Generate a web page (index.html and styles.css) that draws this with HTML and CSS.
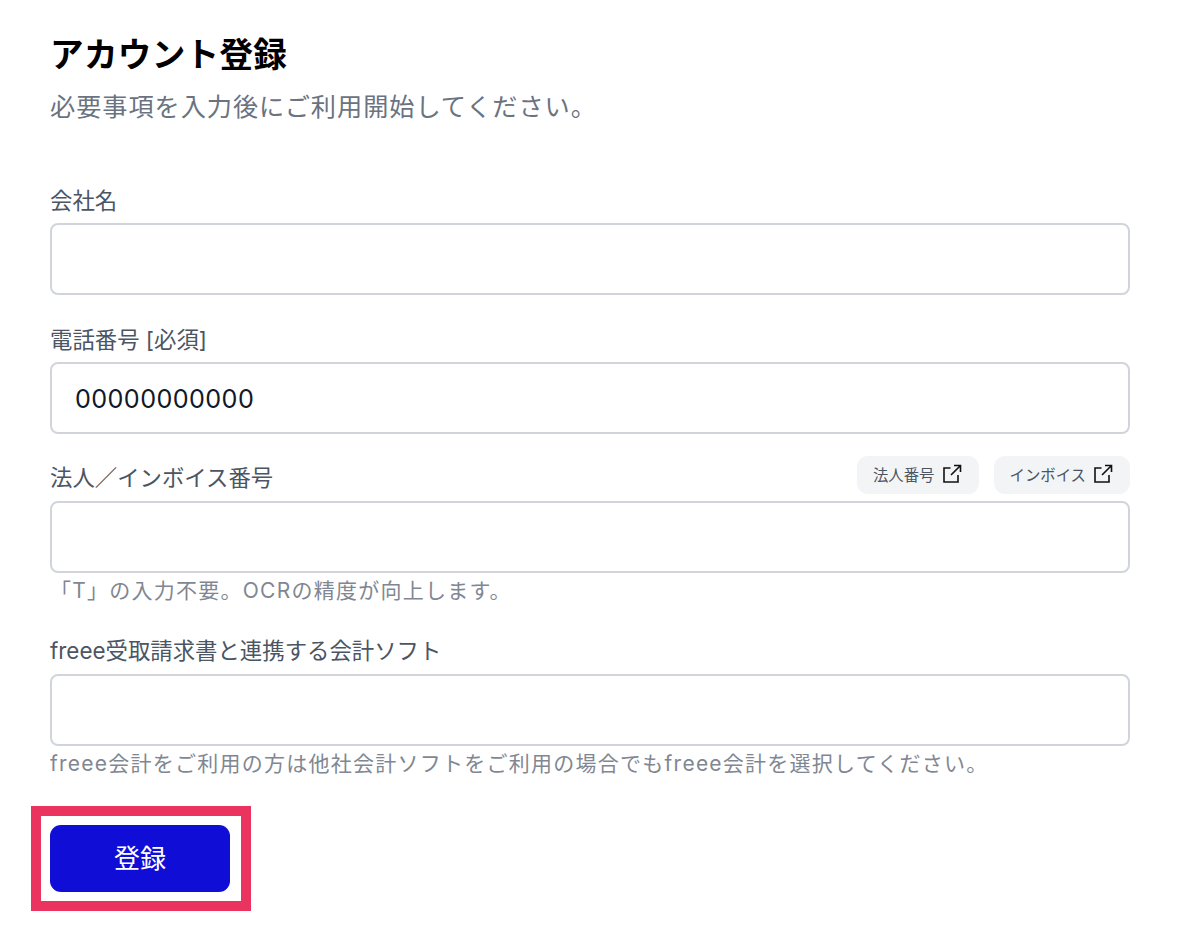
FILE: index.html
```html
<!DOCTYPE html>
<html lang="ja">
<head>
    <meta charset="UTF-8">
    <title>アカウント登録</title>
    <link rel="stylesheet" href="styles.css">
</head>
<body>

<main class="page">
    <h1 class="title">アカウント登録</h1>
    <p class="lead">必要事項を入力後にご利用開始してください。</p>

    <form class="form">
        <div class="field">
            <label class="label">会社名</label>
            <input class="input" type="text">
        </div>

        <div class="field">
            <label class="label">電話番号 [必須]</label>
            <input class="input" type="text" value="00000000000">
        </div>

        <div class="field">
            <div class="labelRow">
                <label class="label">法人／インボイス番号</label>
                <div class="links">
                    <a class="linkBtn">法人番号
                        <svg class="extIcon" viewBox="0 0 19 20"><path d="M7.500 4H1v14h14v-7M8 11l9.500-9.500M11 1.500h6.500V8"/></svg>
                    </a>
                    <a class="linkBtn">インボイス
                        <svg class="extIcon" viewBox="0 0 19 20"><path d="M7.500 4H1v14h14v-7M8 11l9.500-9.500M11 1.500h6.500V8"/></svg>
                    </a>
                </div>
            </div>
            <input class="input" type="text">
            <p class="hint">「T」の入力不要。OCRの精度が向上します。</p>
        </div>

        <div class="field">
            <label class="label labelLatin">freee受取請求書と連携する会計ソフト</label>
            <input class="input" type="text">
            <p class="hint">freee会計をご利用の方は他社会計ソフトをご利用の場合でもfreee会計を選択してください。</p>
        </div>

        <div class="actions">
            <button class="submit" type="button">登録</button>
            <div class="highlight"></div>
        </div>
    </form>
</main>

</body>
</html>
```

FILE: styles.css
```css
* {
    box-sizing: border-box;
}

body {
    margin: 0;
    background: #fff;
    font-family: Inter, "Noto Sans CJK JP", sans-serif;
}

.page {
    width: 1080px;
    margin-left: 50px;
    padding-top: 32px;
    padding-bottom: 30px;
}

.title {
    margin: 0;
    font-size: 33.600px;
    font-weight: 700;
    line-height: 46px;
    letter-spacing: 0.300px;
    color: #000;
}

.lead {
    margin: 10px 0 0;
    font-size: 25.200px;
    line-height: 38px;
    letter-spacing: 0.950px;
    color: #6b7280;
}

.form {
    margin-top: 59px;
}

.field {
    margin-bottom: 29px;
}

.label {
    display: block;
    font-size: 22.400px;
    line-height: 32px;
    margin-bottom: 6px;
    color: #4b5563;
}

.labelLatin {
    line-height: 30px;
    margin-bottom: 8px;
}

.labelRow {
    display: flex;
    justify-content: space-between;
    align-items: flex-end;
    height: 38px;
    margin: -7px 0 7px;
}

.labelRow .label {
    margin-bottom: 0;
}

.links {
    display: flex;
    gap: 15px;
}

.linkBtn {
    display: flex;
    align-items: center;
    gap: 8px;
    height: 38px;
    padding: 0 17px 2px 16px;
    border-radius: 11px;
    background: #f3f4f6;
    font-size: 15.400px;
    color: #4b5563;
}

.extIcon {
    width: 19px;
    height: 20px;
    fill: none;
    stroke: #111;
    stroke-width: 1.600;
}

.input {
    display: block;
    width: 100%;
    height: 72px;
    padding: 2px 23px 0;
    border: 2px solid #d1d5db;
    border-radius: 8px;
    font-family: inherit;
    font-size: 25.200px;
    letter-spacing: 0.400px;
    color: #111827;
    background: #fff;
}

.hint {
    margin: 2px 0 0;
    font-size: 21px;
    line-height: 32px;
    letter-spacing: 1.250px;
    color: #6b7280;
    opacity: 0.85;
}

.actions {
    position: relative;
    margin-top: 45px;
}

.submit {
    display: block;
    width: 180px;
    height: 67px;
    padding: 0 0 4px;
    border: 0;
    border-radius: 11px;
    background: #100dd6;
    color: #fff;
    font-family: inherit;
    font-size: 26px;
}

.highlight {
    position: absolute;
    left: -19px;
    top: -19px;
    width: 220px;
    height: 105px;
    border: 10px solid #ea345f;
}
```
